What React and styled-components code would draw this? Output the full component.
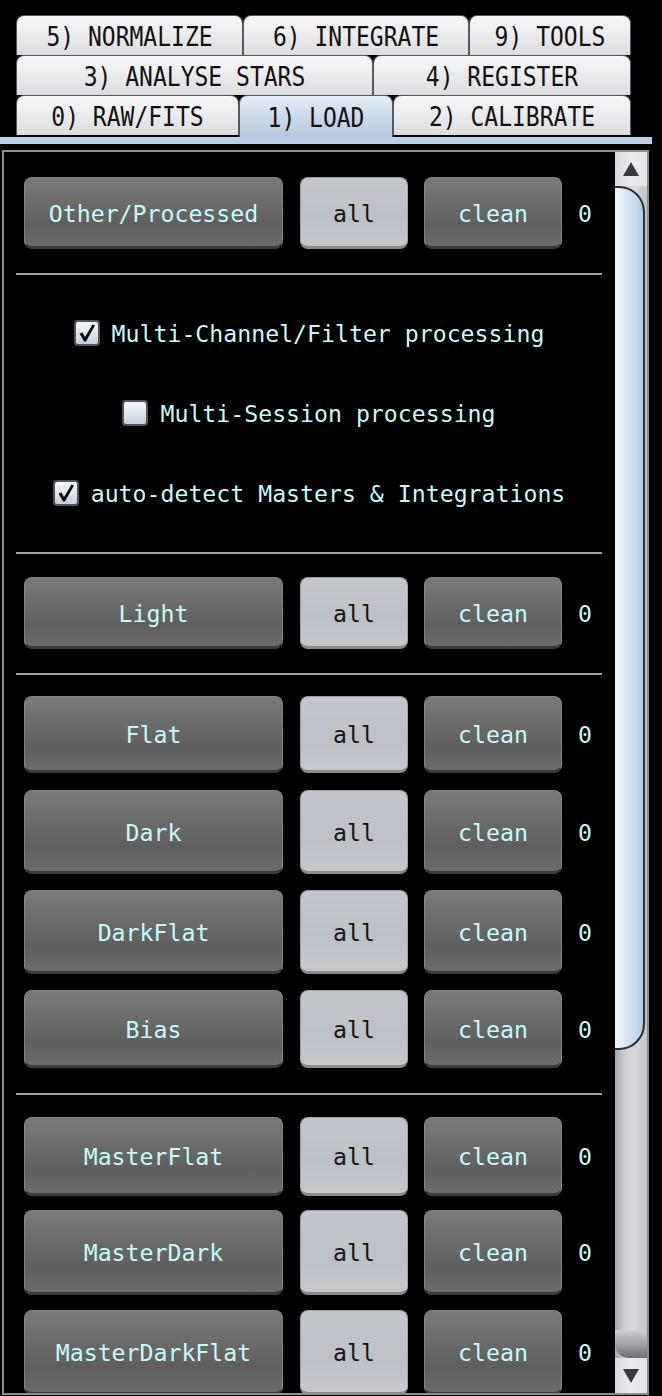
import React from "react";
import styled, { createGlobalStyle } from "styled-components";

const GlobalStyle = createGlobalStyle`
  html, body {
    margin: 0;
    padding: 0;
    background: #000;
  }
  body {
    font-family: "DejaVu Sans Mono", "Liberation Mono", monospace;
    overflow: hidden;
  }
`;

const Screen = styled.div`
  width: 662px;
  height: 1396px;
  padding-top: 15px;
  box-sizing: border-box;
  background: #000;
  overflow: hidden;
`;

const TabStack = styled.div`
  margin-left: 16px;
  width: 615px;
  display: flex;
  flex-direction: column;
`;

const TabRow = styled.div`
  display: flex;
  height: 40px;
`;

const Tab = styled.div`
  position: relative;
  z-index: ${(p) => (p.$active ? 2 : 1)};
  width: ${(p) => p.$w}px;
  height: ${(p) => (p.$active ? 42 : 40)}px;
  box-sizing: border-box;
  border: 1px solid #55585c;
  border-bottom: none;
  border-radius: 8px 8px 0 0;
  background: ${(p) =>
    p.$active
      ? "linear-gradient(#e6eef6 0%, #c9d8e6 55%, #b3c9dc 100%)"
      : "linear-gradient(#f7f7f9 0%, #ebebee 50%, #dcdce0 100%)"};
  display: flex;
  align-items: center;
  justify-content: center;
  padding-top: 3px;
  font-size: 23px;
  color: #111;
  white-space: pre;
  span {
    display: inline-block;
    transform: scaleY(1.17);
  }
`;

const TabBar = styled.div`
  width: 652px;
  height: 7px;
  margin-top: 2px;
  background: #b9d0e4;
`;

const Panel = styled.div`
  margin: 6px 0 0 2px;
  width: 647px;
  height: 1245px;
  box-sizing: border-box;
  border: 2px solid #8c8c8e;
  display: flex;
  overflow: hidden;
`;

const Content = styled.div`
  flex: 1;
  padding: 0 13px 0 12px;
  overflow: hidden;
`;

const Section = styled.div`
  display: flex;
  flex-direction: column;
  padding: ${(p) => p.$top}px 0 ${(p) => p.$bottom}px;
`;

const Rule = styled.div`
  height: 2px;
  background: #a2a2a4;
`;

const ActionRow = styled.div`
  display: flex;
  align-items: center;
  padding-left: 8px;
  height: ${(p) => p.$h}px;
  margin-top: ${(p) => p.$mt || 0}px;
`;

const Button = styled.div`
  width: ${(p) => p.$w}px;
  height: 100%;
  margin-left: ${(p) => p.$ml || 0}px;
  box-sizing: border-box;
  border-radius: 8px;
  display: flex;
  align-items: center;
  justify-content: center;
  padding-top: 2px;
  font-size: 23.2px;
  color: ${(p) => (p.$light ? "#141414" : "#c6fafa")};
  border: 1px solid ${(p) => (p.$light ? "#9c9ea2" : "#858587")};
  border-bottom: 3px solid ${(p) => (p.$light ? "#8a8b8f" : "#3c3c3e")};
  background: ${(p) =>
    p.$light
      ? "linear-gradient(#c4c6cd 0%, #bec0c7 60%, #c6c8ce 100%)"
      : "linear-gradient(#7a7a7a 0%, #6c6c6c 35%, #5e5e5e 70%, #6c6c6c 100%)"};
`;

const Count = styled.div`
  margin-left: 16px;
  font-size: 23.2px;
  color: #c6fafa;
`;

const CheckRow = styled.label`
  height: 80px;
  display: flex;
  align-items: center;
  justify-content: center;
  gap: 12px;
  font-size: 23.2px;
  color: #c6fafa;
  white-space: pre;
`;

const Box = styled.span`
  width: 26px;
  height: 26px;
  box-sizing: border-box;
  border: 2px solid #4f545a;
  border-radius: 4px;
  background: linear-gradient(#f4f6f9 0%, #dfe6ee 50%, #c4d2e0 100%);
  display: flex;
  align-items: center;
  justify-content: center;
`;

const Scrollbar = styled.div`
  width: 32px;
  display: flex;
  flex-direction: column;
  background: linear-gradient(90deg, #a6a6aa 0%, #cfcfd3 30%, #d9d9dd 60%, #c4c4c8 100%);
`;

const Arrow = styled.div`
  height: ${(p) => p.$h}px;
  display: flex;
  align-items: center;
  justify-content: center;
  background: linear-gradient(90deg, #d8d8dc 0%, #ececef 50%, #e2e2e6 100%);
`;

const Track = styled.div`
  flex: 1;
  display: flex;
  flex-direction: column;
`;

const Thumb = styled.div`
  height: 864px;
  margin-right: 2px;
  box-sizing: border-box;
  border: 2px solid #22313f;
  border-left: none;
  border-radius: 0 26px 26px 0;
  background: linear-gradient(90deg, #f2f7fb 0%, #dce9f4 35%, #c6dbec 75%, #b2cbe0 100%);
`;

const TrackEnd = styled.div`
  margin-top: auto;
  height: 28px;
  background: linear-gradient(#cfcfd3 0%, #9a9a9e 60%, #6e6e72 100%);
  border-radius: 0 0 0 14px;
`;

const tabRows = [
  [["5) NORMALIZE", 227], ["6) INTEGRATE", 226], ["9) TOOLS", 162]],
  [["3) ANALYSE STARS", 357], ["4) REGISTER", 258]],
  [["0) RAW/FITS", 223], ["1) LOAD", 154, true], ["2) CALIBRATE", 238]],
];

const Check = () => (
  <svg width="20" height="20" viewBox="0 0 20 20">
    <path d="M2.5 10.5 L5.5 9.5 L8 14 L15.5 1.5 L18 2.5 L9 18.5 L7 18.5 Z" fill="#0c0c0c" />
  </svg>
);

const FrameRow = ({ name, h, mt }) => (
  <ActionRow $h={h} $mt={mt}>
    <Button $w={259}>{name}</Button>
    <Button $w={108} $ml={17} $light>
      all
    </Button>
    <Button $w={138} $ml={16}>
      clean
    </Button>
    <Count>0</Count>
  </ActionRow>
);

const Triangle = ({ down }) => (
  <svg width="16" height="14" viewBox="0 0 16 14">
    <path d={down ? "M0 0 H16 L8 14 Z" : "M8 0 L16 14 H0 Z"} fill="#3a3a3c" />
  </svg>
);

export default function App() {
  return (
    <Screen>
      <GlobalStyle />
      <TabStack>
        {tabRows.map((row, i) => (
          <TabRow key={i}>
            {row.map(([label, w, active]) => (
              <Tab key={label} $w={w} $active={active}>
                <span>{label}</span>
              </Tab>
            ))}
          </TabRow>
        ))}
      </TabStack>
      <TabBar />
      <Panel>
        <Content>
          <Section $top={25} $bottom={24}>
            <FrameRow name="Other/Processed" h={72} />
          </Section>
          <Rule />
          <Section $top={18} $bottom={19}>
            <CheckRow>
              <Box>
                <Check />
              </Box>
              Multi-Channel/Filter processing
            </CheckRow>
            <CheckRow>
              <Box />
              Multi-Session processing
            </CheckRow>
            <CheckRow>
              <Box>
                <Check />
              </Box>
              auto-detect Masters &amp; Integrations
            </CheckRow>
          </Section>
          <Rule />
          <Section $top={23} $bottom={24}>
            <FrameRow name="Light" h={72} />
          </Section>
          <Rule />
          <Section $top={21} $bottom={25}>
            <FrameRow name="Flat" h={77} />
            <FrameRow name="Dark" h={84} mt={17} />
            <FrameRow name="DarkFlat" h={84} mt={16} />
            <FrameRow name="Bias" h={78} mt={16} />
          </Section>
          <Rule />
          <Section $top={22} $bottom={0}>
            <FrameRow name="MasterFlat" h={79} />
            <FrameRow name="MasterDark" h={85} mt={14} />
            <FrameRow name="MasterDarkFlat" h={85} mt={15} />
          </Section>
        </Content>
        <Scrollbar>
          <Arrow $h={34}>
            <Triangle />
          </Arrow>
          <Track>
            <Thumb />
            <TrackEnd />
          </Track>
          <Arrow $h={35}>
            <Triangle down />
          </Arrow>
        </Scrollbar>
      </Panel>
    </Screen>
  );
}
